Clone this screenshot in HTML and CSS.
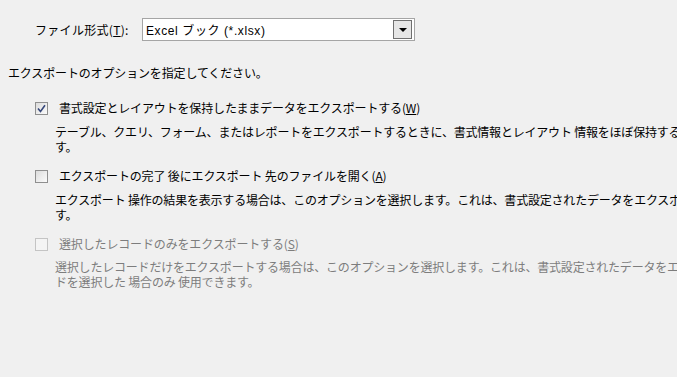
FILE: index.html
```html
<!DOCTYPE html>
<html lang="ja">
<head>
    <meta charset="UTF-8">
    <title>エクスポート</title>
    <link rel="stylesheet" href="styles.css">
</head>
<body>
    <div class="dialog">
        <!-- File format row -->
        <div class="format-row">
            <label class="format-label">ファイル形式(<u>T</u>):</label>
            <div class="combo">
                <span class="combo-text">Excel ブック (*.xlsx)</span>
                <span class="combo-btn"><span class="arrow"></span></span>
            </div>
        </div>

        <p class="intro">エクスポートのオプションを指定してください。</p>

        <div class="option">
            <div class="option-head">
                <span class="check checked">
                    <svg width="9" height="9" viewBox="0 0 9 9"><path d="M1 4.5 L3.5 7.5 L8 1.2" fill="none" stroke="#36477a" stroke-width="1.6"/></svg>
                </span>
                <span class="option-label">書式設定とレイアウトを保持したままデータをエクスポートする(<u>W</u>)</span>
            </div>
            <div class="option-desc">
                <span class="line">テーブル、クエリ、フォーム、またはレポートをエクスポートするときに、書式情報とレイアウト 情報をほぼ保持する場合に選択しま</span>
                <span class="line">す。</span>
            </div>
        </div>

        <div class="option">
            <div class="option-head">
                <span class="check"></span>
                <span class="option-label">エクスポートの完了 後にエクスポート 先のファイルを開く(<u>A</u>)</span>
            </div>
            <div class="option-desc">
                <span class="line">エクスポート 操作の結果を表示する場合は、このオプションを選択します。これは、書式設定されたデータをエクスポートする場合のみ使用できま</span>
                <span class="line">す。</span>
            </div>
        </div>

        <div class="option disabled">
            <div class="option-head">
                <span class="check"></span>
                <span class="option-label">選択したレコードのみをエクスポートする(<u>S</u>)</span>
            </div>
            <div class="option-desc">
                <span class="line">選択したレコードだけをエクスポートする場合は、このオプションを選択します。これは、書式設定されたデータをエクスポートする場合で、レコー</span>
                <span class="line">ドを選択した 場合のみ 使用できます。</span>
            </div>
        </div>
    </div>
</body>
</html>
```

FILE: styles.css
```css
body {
    margin: 0;
    background-color: #f0f0f0;
    font-family: 'Noto Sans CJK JP', 'Liberation Sans', sans-serif;
    font-size: 12px;
    color: #000;
    overflow: hidden;
}

.dialog {
    width: 900px;
    padding: 18px 0 0 8px;
}

/* File format */
.format-row {
    display: flex;
    align-items: center;
    padding-left: 27px;
}

.format-label {
    width: 107px;
    letter-spacing: 0.3px;
}

.combo {
    width: 271px;
    height: 21px;
    border: 1px solid #a5a5a5;
    background-color: #fff;
    display: flex;
    align-items: center;
    justify-content: space-between;
}

.combo-text {
    padding-left: 3px;
    font-family: 'Liberation Sans', 'Noto Sans CJK JP', sans-serif;
    font-size: 12px;
    letter-spacing: 0.6px;
}

.combo-btn {
    width: 17px;
    height: 17px;
    margin-right: 2px;
    border: 1px solid #707070;
    background-color: #e6e6e6;
    display: flex;
    align-items: center;
    justify-content: center;
}

.arrow {
    width: 0;
    height: 0;
    border-left: 4px solid transparent;
    border-right: 4px solid transparent;
    border-top: 4px solid #000;
}

.intro {
    margin: 23px 0 0 0;
    letter-spacing: -0.15px;
}

/* Options */
.option {
    margin-top: 19px;
    padding-left: 27px;
}

.option + .option {
    margin-top: 14px;
}

.option-head {
    display: flex;
    align-items: center;
}

.check {
    width: 11px;
    height: 11px;
    border: 1px solid #8f8f8f;
    background: linear-gradient(135deg, #dcdcdc, #fbfbfb);
    display: flex;
    align-items: center;
    justify-content: center;
    margin-right: 11px;
}

.option-label {
    letter-spacing: -0.15px;
    line-height: 16px;
}

.option-desc {
    margin-top: 8px;
    padding-left: 20px;
    white-space: nowrap;
    letter-spacing: -0.2px;
}

.option-desc .line {
    display: block;
    height: 15px;
    line-height: 15px;
}

.disabled .option-desc {
    margin-top: 7px;
}

.disabled .check {
    border-color: #c4c4c4;
    background: #f4f4f4;
}

.disabled .option-label,
.disabled .option-desc {
    color: #7d7d7d;
}
```
